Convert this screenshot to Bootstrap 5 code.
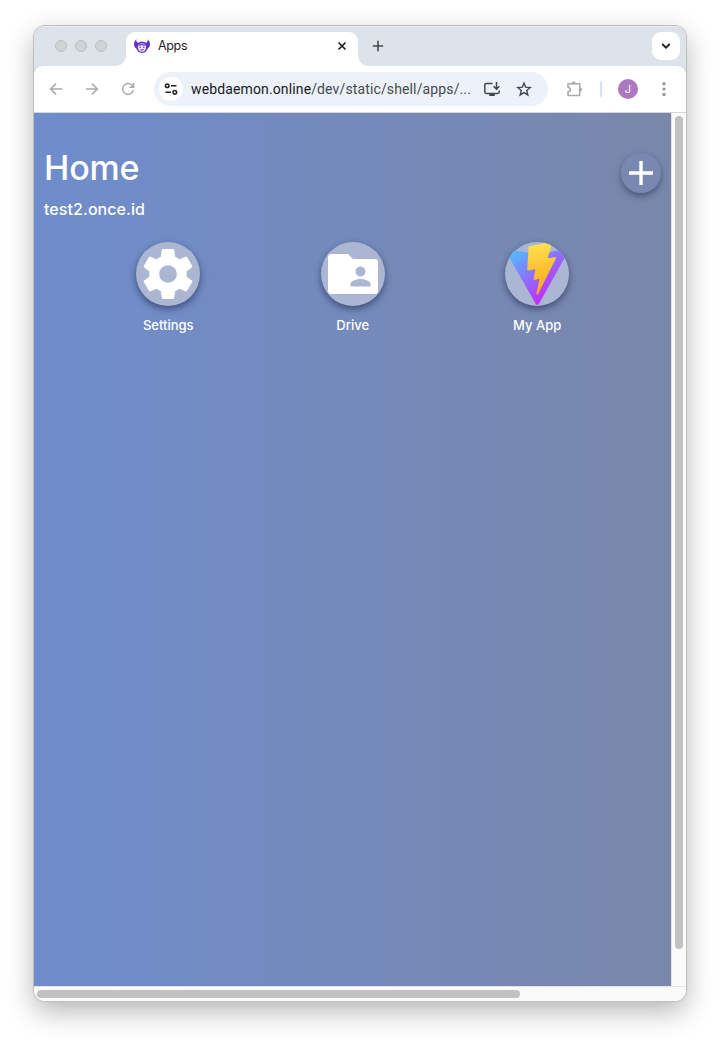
<!DOCTYPE html>
<html lang="en">
<head>
<meta charset="utf-8">
<meta name="viewport" content="width=device-width, initial-scale=1">
<title>Apps</title>
<link href="https://cdn.jsdelivr.net/npm/bootstrap@5.3.0/dist/css/bootstrap.min.css" rel="stylesheet">
<script src="https://cdn.jsdelivr.net/npm/bootstrap@5.3.0/dist/js/bootstrap.bundle.min.js" defer></script>
<style>
body{background:#fff;height:1043px;overflow:hidden;font-family:Inter,"Liberation Sans",sans-serif;padding:26px 34px 42px}
svg{display:block;flex:none}
.browser{height:975px;border-radius:11px;background:#fff;box-shadow:0 0 0 1px #bfbfbf,0 10px 28px rgba(0,0,0,.3)}
.tabstrip{height:40px;background:#dee2e9;padding-left:21px;padding-right:6px;box-shadow:inset 0 1px #e9ecf1}
.light{width:12px;height:12px;border-radius:50%;background:#d1d4d6;border:1px solid #bbbec1}
.lights{gap:8px;width:71px;height:40px}
.tab{width:232px;height:34px;margin-top:6px;padding:0 11px 6px 8px;background:#fff;border-radius:9px 9px 0 0;position:relative;font-size:12.5px;color:#1f2023}
.tab::before,.tab::after{content:"";position:absolute;bottom:0;width:10px;height:10px}
.tab::before{left:-10px;background:radial-gradient(circle at 0 0,transparent 9.5px,#fff 10px)}
.tab::after{right:-10px;background:radial-gradient(circle at 100% 0,transparent 9.5px,#fff 10px)}
.tab-name{margin-left:8px;font-family:Inter,sans-serif;letter-spacing:-.35px}
.tab-menu{width:28px;height:28px;border-radius:9px;background:#fff;margin-top:6px}
.toolbar-wrap{background:#dee2e9}
.toolbar{height:47px;background:#fff;border-radius:9px 9px 0 0;border-bottom:1px solid #d6d6d8;padding:0 14px}
.address{width:394px;height:34px;border-radius:17px;background:#ecf1fa;padding:0 15px 0 5px;margin-left:18px}
.site-info{width:24px;height:24px;border-radius:50%;background:#fff}
.url{margin-left:8px;width:280px;font:14px/20px Roboto,"Liberation Sans",sans-serif;color:#46494c;letter-spacing:.13px}
.url b{font-weight:400;color:#17191b}
.divider{width:2px;height:16px;background:#d3e3fd;margin-left:16px;border-radius:1px}
.avatar{width:20px;height:20px;border-radius:50%;background:#ad77c2;color:#fff;font-size:11px;margin-left:16px}
.viewport-row{height:873px}
.home{width:637px;background:linear-gradient(90deg,#6f8dcc,#7987aa);color:#fff;padding:32px 10px 0}
.home-title{font-size:34px;line-height:46px;font-weight:500;margin:0;letter-spacing:-.15px}
.host{font-size:16px;line-height:24px;font-weight:500;margin-top:6px;letter-spacing:.07px}
.add-btn{width:40px;height:40px;border-radius:50%;background:#7988b0;border:0;padding:0;margin-top:8px;box-shadow:0 3px 6px rgba(35,45,75,.55)}
.apps{padding:21px 31.6px 0 32px}
.app-icon{width:64px;height:64px;border-radius:50%;background:#abb6d2;overflow:hidden;box-shadow:0 3px 7px rgba(35,45,80,.65)}
.app-name{font-size:13px;line-height:20px;margin-top:9px;font-weight:500}
.vbar{width:15px;background:#fafafa;border-left:1px solid #e4e4e8;padding:3px 3px 0}
.vthumb{height:833px;width:8px;border-radius:4px;background:#c1c1c1}
.hbar{height:15px;background:#fafafa;border-top:1px solid #e4e4e8;padding:3px 3px 0}
.hthumb{width:483px;height:8px;border-radius:4px;background:#c1c1c1}
</style>
</head>
<body>
<div class="browser overflow-hidden d-flex flex-column">
  <div class="tabstrip d-flex">
    <div class="lights d-flex align-items-center"><span class="light"></span><span class="light"></span><span class="light"></span></div>
    <div class="tab d-flex align-items-center">
      <svg width="16" height="16" viewBox="0 0 16 16"><g fill="#6534bd"><path d="M2.600 1.200C1.800 2.800 2.400 4.300 4.600 4.900L3.600 11C1.200 10.400 0 8.700 0 6.300 0 4 1 2.200 2.600 1.200ZM13.400 1.200c.8 1.600.2 3.100-2 3.700l1 6.100c2.400-.6 3.600-2.300 3.600-4.700 0-2.300-1-4.100-2.600-5.100Z"/><circle cx="8" cy="9.200" r="5.800"/></g><path d="M3.900 8.800C3.900 6.300 6 5.200 8 5.200s4.100 1.100 4.100 3.600c0 3-1.500 5-4.100 5s-4.100-2-4.100-5Z" fill="#f1e8ff"/><path d="M4.200 8C4.800 4.800 11.200 4.800 11.800 8 10 8.200 8.800 7.600 8 6.900 7.200 7.600 6 8.200 4.200 8Z" fill="#8a5cd6"/><circle cx="6.200" cy="9.300" r=".8" fill="#6534bd"/><circle cx="9.800" cy="9.300" r=".8" fill="#6534bd"/><path d="M6.300 11.500q1.700 1.300 3.400 0" stroke="#6534bd" fill="none"/></svg>
      <span class="tab-name">Apps</span>
      <svg class="ms-auto" width="10" height="10" viewBox="0 0 10 10" stroke="#1f2023" stroke-width="1.700"><path d="m1.500 1.500 7 7m0-7-7 7"/></svg>
    </div>
    <svg style="margin:14px 0 0 14px" width="12" height="12" viewBox="0 0 12 12" stroke="#44474a" stroke-width="1.600"><path d="M6 .8v10.400M.8 6h10.400"/></svg>
    <div class="tab-menu ms-auto d-flex align-items-center justify-content-center">
      <svg width="10" height="8" viewBox="0 0 10 8" fill="none" stroke="#1f2023" stroke-width="1.900"><path d="m1.200 2 3.800 3.700L8.800 2"/></svg>
    </div>
  </div>
  <div class="toolbar-wrap">
    <div class="toolbar d-flex align-items-center">
      <svg width="16" height="16" viewBox="0 0 16 16" fill="none" stroke="#a9aaac" stroke-width="1.500"><path d="M14 8H2.800M8 2.600 2.600 8 8 13.400"/></svg>
      <svg style="margin-left:20px" width="16" height="16" viewBox="0 0 16 16" fill="none" stroke="#a9aaac" stroke-width="1.500"><path d="M2 8h11.200M8 2.600 13.400 8 8 13.400"/></svg>
      <svg style="margin-left:20px" width="16" height="16" viewBox="0 0 16 16" fill="none" stroke="#a9aaac" stroke-width="1.500"><path d="M13.300 9.300A5.400 5.400 0 1 1 12 4.300L13.500 6M13.600 2v4.300H9.300"/></svg>
      <div class="address d-flex align-items-center">
        <div class="site-info d-flex align-items-center justify-content-center"><svg width="14" height="14" viewBox="0 0 14 14" fill="none" stroke="#1f2023" stroke-width="1.500"><circle cx="3.200" cy="3.700" r="1.800"/><path d="M7 3.700h5.500M1.500 10.200H7"/><circle cx="10.800" cy="10.200" r="1.800"/></svg></div>
        <div class="url text-nowrap"><b>webdaemon.online</b>/dev/static/shell/apps/...</div>
        <svg style="margin-left:13px" width="16" height="16" viewBox="0 0 16 16" fill="none" stroke="#44474a" stroke-width="1.500"><path d="M8.500 2.500H2.200Q.8 2.500.8 3.900v7.200q0 1.400 1.400 1.400h11.600q1.400 0 1.400-1.400V9.500M12.500 1v7M9.600 5.300l2.900 2.900 2.900-2.900"/><path d="M5.200 12.500h5.600v2.400H5.200Z" fill="#44474a" stroke="none"/></svg>
        <svg class="ms-3" width="16" height="16" viewBox="0 0 16 16" fill="none" stroke="#44474a" stroke-width="1.400"><path d="m8 2.100 1.600 4 4.600.4-3.500 3 1.100 4.400L8 11.600l-3.800 2.300 1.100-4.400-3.500-3 4.600-.4Z"/></svg>
      </div>
      <svg style="margin-left:18px" width="18" height="18" viewBox="0 0 18 18"><path d="M2 3.700h11.700v11.800H2v-3.600c3.200-.4 3.200-4.300 0-4.700Z" fill="none" stroke="#a9aaac" stroke-width="1.600" stroke-linejoin="round"/><path d="M5.600 3.500a2.100 2.100 0 0 1 4.200 0ZM14 7.500a2.100 2.100 0 0 1 0 4.200Z" fill="#a9aaac"/></svg>
      <span class="divider"></span>
      <span class="avatar d-flex align-items-center justify-content-center">J</span>
      <svg class="ms-auto" width="16" height="16" viewBox="0 0 16 16" fill="#999a9c"><circle cx="8" cy="2.700" r="1.700"/><circle cx="8" cy="8.100" r="1.700"/><circle cx="8" cy="13.500" r="1.700"/></svg>
    </div>
  </div>
  <div class="viewport-row d-flex">
    <main class="home">
      <header class="d-flex justify-content-between align-items-start">
        <div><h1 class="home-title">Home</h1><div class="host">test2.once.id</div></div>
        <button class="add-btn d-flex align-items-center justify-content-center" aria-label="Add"><svg width="24" height="24" viewBox="0 0 24 24" stroke="#fff" stroke-width="3.400"><path d="M12 0v24M0 12h24"/></svg></button>
      </header>
      <div class="apps"><div class="row g-0 text-center">
        <div class="col-4 d-flex flex-column align-items-center">
          <div class="app-icon d-flex align-items-center justify-content-center"><svg width="60" height="60" viewBox="0 0 24 24" fill="#fff"><path d="M19.430 12.980c.04-.32.07-.64.07-.98s-.03-.66-.07-.98l2.110-1.650c.19-.15.24-.42.12-.64l-2-3.460c-.12-.22-.39-.3-.61-.22l-2.490 1c-.52-.4-1.080-.73-1.690-.98l-.38-2.650C14.460 2.180 14.250 2 14 2h-4c-.25 0-.46.18-.49.42l-.38 2.650c-.61.25-1.170.59-1.690.98l-2.490-1c-.23-.09-.49 0-.61.22l-2 3.460c-.13.22-.07.49.12.64l2.110 1.650c-.04.32-.07.65-.07.98s.03.66.07.98l-2.110 1.650c-.19.15-.24.42-.12.64l2 3.460c.12.22.39.3.61.22l2.490-1c.52.4 1.080.73 1.690.98l.38 2.650c.03.24.24.42.49.42h4c.25 0 .46-.18.49-.42l.38-2.650c.61-.25 1.170-.59 1.690-.98l2.490 1c.23.09.49 0 .61-.22l2-3.460c.12-.22.07-.49-.12-.64l-2.110-1.650zM12 15.500c-1.930 0-3.500-1.570-3.500-3.500s1.570-3.500 3.500-3.500 3.500 1.570 3.500 3.500-1.570 3.500-3.500 3.500z"/></svg></div>
          <div class="app-name">Settings</div>
        </div>
        <div class="col-4 d-flex flex-column align-items-center">
          <div class="app-icon d-flex align-items-center justify-content-center"><svg width="60" height="60" viewBox="0 0 24 24" fill="#fff"><path d="M20.800 6h-8.800l-2-2H3.200C2.500 4 2 4.500 2 5.200v13.600c0 .7.5 1.200 1.200 1.200h17.600c.7 0 1.200-.5 1.200-1.200V7.200c0-.7-.5-1.200-1.200-1.200zM15 9c1.100 0 2 .9 2 2s-.9 2-2 2-2-.9-2-2 .9-2 2-2zm4 8h-8v-1c0-1.330 2.670-2 4-2s4 .67 4 2v1z"/></svg></div>
          <div class="app-name">Drive</div>
        </div>
        <div class="col-4 d-flex flex-column align-items-center">
          <div class="app-icon d-flex align-items-center justify-content-center"><svg width="66" height="66" viewBox="0 -4 410 410"><defs><linearGradient id="vA" x1="6" y1="33" x2="235" y2="344" gradientUnits="userSpaceOnUse"><stop stop-color="#41d1ff"/><stop offset="1" stop-color="#bd34fe"/></linearGradient><linearGradient id="vB" x1="194.650" y1="8.818" x2="236.080" y2="292.990" gradientUnits="userSpaceOnUse"><stop stop-color="#ffea52"/><stop offset=".083" stop-color="#ffdd4a"/><stop offset="1" stop-color="#ffa820"/></linearGradient></defs><path fill="url(#vA)" d="M399.641 59.525 215.643 388.545C211.844 395.338 202.084 395.378 198.228 388.618L10.582 59.556C6.381 52.190 12.680 43.267 21.028 44.759L205.223 77.682C206.398 77.892 207.601 77.890 208.776 77.676L389.119 44.806C397.439 43.289 403.768 52.143 399.641 59.525Z"/><path fill="url(#vB)" d="M292.965 1.574 156.801 28.255C154.563 28.694 152.906 30.590 152.771 32.866L144.395 174.330C144.198 177.662 147.258 180.248 150.510 179.498L188.420 170.749C191.967 169.931 195.172 173.055 194.443 176.622L183.180 231.775C182.422 235.487 185.907 238.661 189.532 237.560L212.947 230.446C216.577 229.344 220.065 232.527 219.297 236.242L201.398 322.875C200.278 328.294 207.486 331.249 210.492 326.603L212.500 323.500 323.454 102.072C325.312 98.365 322.108 94.137 318.036 94.923L279.014 102.454C275.347 103.161 272.227 99.746 273.262 96.158L298.731 7.867C299.767 4.273 296.636.855 292.965 1.574Z"/></svg></div>
          <div class="app-name">My App</div>
        </div>
      </div></div>
    </main>
    <div class="vbar"><div class="vthumb"></div></div>
  </div>
  <div class="hbar"><div class="hthumb"></div></div>
</div>
</body>
</html>
